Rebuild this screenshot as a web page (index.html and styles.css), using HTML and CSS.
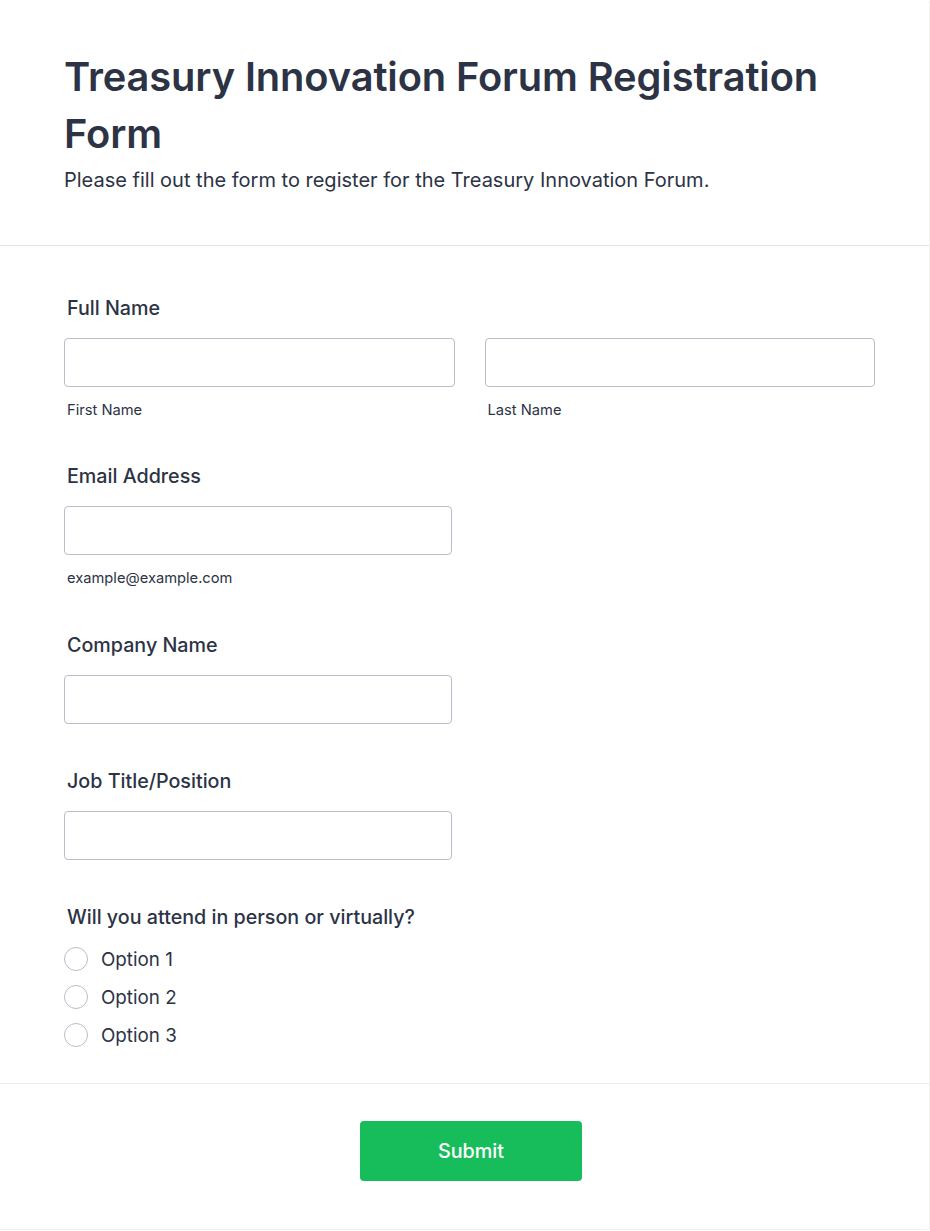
FILE: index.html
```html
<!DOCTYPE html>
<html>
<head>
<meta charset="utf-8">
<link rel="stylesheet" href="styles.css">
</head>
<body>
<div class="card">
  <header class="header">
    <h1 class="title">Treasury Innovation Forum Registration Form</h1>
    <p class="subtitle">Please fill out the form to register for the Treasury Innovation Forum.</p>
  </header>
  <form class="form">
    <div class="field">
      <div class="label">Full Name</div>
      <div class="name-row">
        <div class="sub">
          <input class="input" type="text">
          <div class="hint">First Name</div>
        </div>
        <div class="sub">
          <input class="input" type="text">
          <div class="hint">Last Name</div>
        </div>
      </div>
    </div>
    <div class="field email">
      <div class="label">Email Address</div>
      <input class="input short" type="text">
      <div class="hint">example@example.com</div>
    </div>
    <div class="field">
      <div class="label">Company Name</div>
      <input class="input short" type="text">
    </div>
    <div class="field">
      <div class="label">Job Title/Position</div>
      <input class="input short" type="text">
    </div>
    <div class="field radios">
      <div class="label">Will you attend in person or virtually?</div>
      <label class="option"><span class="circle"></span><span>Option 1</span></label>
      <label class="option"><span class="circle"></span><span>Option 2</span></label>
      <label class="option"><span class="circle"></span><span>Option 3</span></label>
    </div>
  </form>
  <div class="footer">
    <button class="submit" type="button">Submit</button>
  </div>
</div>
</body>
</html>
```
FILE: styles.css
```css
html, body {
  margin: 0;
  padding: 0;
  background: #ffffff;
}
body {
  font-family: Inter, "Noto Sans", sans-serif;
  color: #2c3345;
}
.card {
  width: 930px;
  height: 1230px;
  box-sizing: border-box;
  border-right: 1px solid #f1f1f4;
  border-bottom: 1px solid #f1f1f4;
  border-radius: 0 3px 3px 0;
  background: #fff;
}
.header {
  padding: 48px 64px 0 64px;
  height: 246px;
  box-sizing: border-box;
  border-bottom: 1px solid #e2e4ea;
}
.title {
  margin: 0;
  font-size: 39.8px;
  line-height: 57px;
  font-weight: 600;
  color: #2c3345;
  letter-spacing: -0.1px;
}
.subtitle {
  margin: 6px 0 0 0;
  font-size: 20px;
  line-height: 24px;
  color: #2c3345;
}
.form {
  padding: 50px 54px 29px 64px;
  box-sizing: border-box;
  border-bottom: 1px solid #e9ebf0;
}
.field {
  display: flex;
  flex-direction: column;
  align-items: flex-start;
  margin-bottom: 45px;
}
.field.email {
  margin-bottom: 46px;
}
.field:last-child {
  margin-bottom: 0;
}
.field.radios {
  margin-top: 1px;
}
.label {
  font-size: 19.7px;
  line-height: 24px;
  font-weight: 500;
  padding-left: 3px;
  margin-bottom: 18px;
}
.name-row {
  display: flex;
  gap: 30px;
  width: 811px;
}
.sub {
  flex: 1;
  display: flex;
  flex-direction: column;
}
.input {
  height: 49px;
  box-sizing: border-box;
  border: 1px solid #b8bdc9;
  border-radius: 4px;
  margin: 0;
  padding: 0 12px;
  background: #fff;
  width: 100%;
  font-family: inherit;
}
.input.short {
  width: 388px;
}
.hint {
  font-size: 14.7px;
  line-height: 18px;
  margin-top: 14px;
  padding-left: 3px;
  color: #2c3345;
}
.radios .label {
  margin-bottom: 11px;
}
.option {
  display: flex;
  align-items: center;
  gap: 13px;
  height: 38px;
  font-size: 18.8px;
}
.circle {
  width: 24px;
  height: 24px;
  box-sizing: border-box;
  border: 1px solid #b8bdc9;
  border-radius: 50%;
  background: #fff;
}
.footer {
  display: flex;
  justify-content: center;
  padding: 37px 0 0 13px;
}
.submit {
  width: 222px;
  height: 60px;
  background: #18bd5b;
  border: none;
  border-radius: 4px;
  color: #fff;
  font-family: inherit;
  font-size: 19.8px;
  font-weight: 500;
}
```
